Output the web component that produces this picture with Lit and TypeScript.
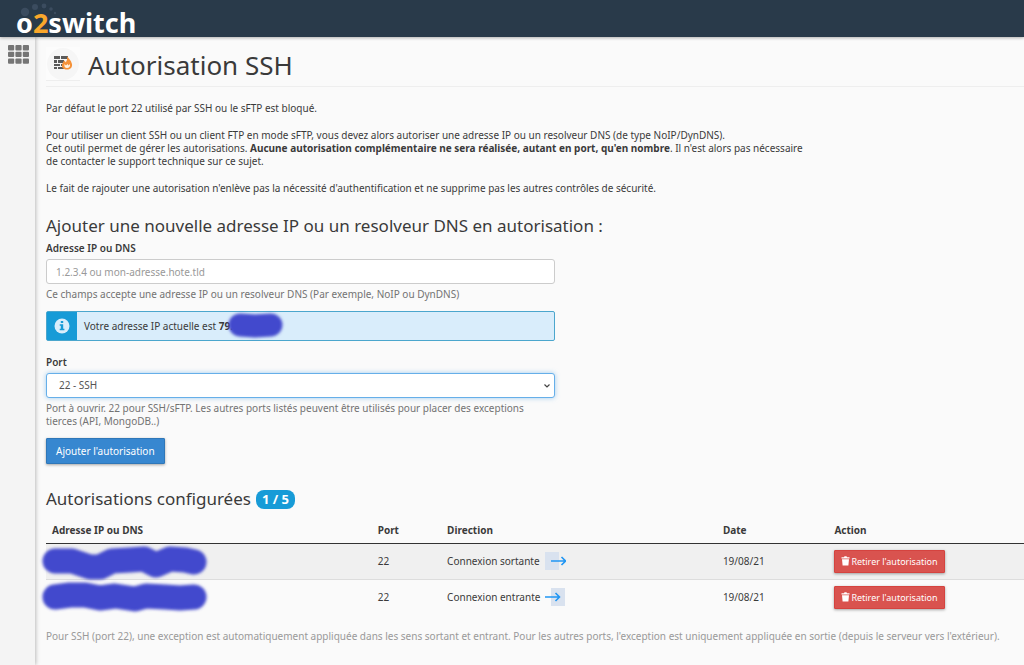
import { LitElement, html, svg, css } from "lit";
import { customElement, state } from "lit/decorators.js";

interface Rule {
  id: string;
  port: number;
  direction: "sortante" | "entrante";
  date: string;
  mask: string;
}

const RULES: Rule[] = [
  {
    id: "out",
    port: 22,
    direction: "sortante",
    date: "19/08/21",
    mask: "M15 18 L32 18 L50 24 L60 24 L72 18 L90 17 L104 16 L116 22 L130 16 L145 17 L154 19",
  },
  {
    id: "in",
    port: 22,
    direction: "entrante",
    date: "19/08/21",
    mask: "M15 18 L30 16 L45 16 L60 19 L75 17 L95 20 L106 17 L125 18 L140 19 L154 18",
  },
];

@customElement("app-root")
export class AppRoot extends LitElement {
  @state() private rules = RULES;

  static styles = css`
    :host {
      display: flex;
      flex-direction: column;
      min-height: 100vh;
      background: #fafafa;
      color: #3a3a3a;
      font: 10px/13px "Noto Sans", "Open Sans", sans-serif;
    }
    * {
      box-sizing: border-box;
    }
    .topbar {
      display: flex;
      align-items: center;
      height: 37px;
      padding: 0 16px;
      background: #293a4a;
      box-shadow: 0 1px 3px rgba(0, 0, 0, 0.3);
      z-index: 1;
    }
    .logo {
      position: relative;
      padding-top: 8px;
      font: 700 27px/30px "Noto Sans", "Open Sans", sans-serif;
      color: #fff;
      text-decoration: none;
    }
    .logo-two {
      color: #f9a72b;
    }
    .logo-dots {
      position: absolute;
      left: 3px;
      top: 2px;
    }
    .logo-text {
      position: relative;
    }
    .body {
      display: flex;
      flex: 1;
    }
    .rail {
      flex: none;
      width: 35px;
      padding: 8px 0 0 8px;
      background: #f4f4f4;
      box-shadow: 1px 0 4px rgba(0, 0, 0, 0.25);
    }
    .apps {
      display: block;
      padding: 0;
      border: 0;
      background: none;
    }
    .apps svg {
      display: block;
    }
    main {
      flex: 1;
      min-width: 0;
      padding: 9px 0 20px 11px;
    }
    .title {
      display: flex;
      align-items: center;
      gap: 8px;
      height: 41px;
      border-bottom: 1px solid #eee;
      padding-bottom: 4px;
    }
    .title svg {
      flex: none;
    }
    h1 {
      margin: 0;
      padding-top: 2px;
      font-size: 26px;
      line-height: 32px;
      font-weight: 400;
    }
    h2 {
      display: flex;
      align-items: center;
      gap: 5px;
      margin: 0;
      font-size: 17px;
      line-height: 22px;
      font-weight: 400;
    }
    .intro {
      display: flex;
      flex-direction: column;
      gap: 14px;
      max-width: 78%;
      padding: 15px 0 20px;
    }
    p {
      margin: 0;
    }
    .form {
      width: 52%;
      padding-bottom: 24px;
    }
    .label {
      display: block;
      padding: 5px 0 4px;
      font-weight: 600;
    }
    .field {
      display: block;
      width: 100%;
      height: 25px;
      padding: 0 9px;
      border: 1px solid #ccc;
      border-radius: 3px;
      background: #fff;
      color: #555;
      font: inherit;
    }
    .field::placeholder {
      color: #999;
      opacity: 1;
    }
    .select {
      position: relative;
    }
    .select .field {
      appearance: none;
      padding: 0 12px;
      border-color: #66afe9;
      box-shadow: 0 0 5px rgba(102, 175, 233, 0.6);
    }
    .chevron {
      position: absolute;
      right: 4px;
      top: 10px;
      pointer-events: none;
    }
    .help {
      padding-top: 4px;
      color: #737373;
    }
    .alert {
      display: flex;
      height: 30px;
      margin: 10px 0;
      border: 1px solid #4ba6cd;
      border-radius: 2px;
      background: #d9edfb;
    }
    .alert-icon {
      display: flex;
      align-items: center;
      justify-content: center;
      width: 30px;
      background: #179bd7;
    }
    .alert-text {
      display: flex;
      align-items: center;
      padding-left: 7px;
      white-space: pre;
    }
    .ip-mask {
      margin: -6px 0 -6px -8px;
    }
    button {
      font: inherit;
      cursor: pointer;
    }
    .btn {
      display: inline-flex;
      align-items: center;
      color: #fff;
      border: 1px solid;
      border-radius: 1px;
      box-shadow: 0 1px 3px rgba(0, 0, 0, 0.35);
    }
    .btn-primary {
      height: 26px;
      margin-top: 10px;
      padding: 0 9px;
      background: #3787d0;
      border-color: #2f77b8;
    }
    .btn-danger {
      gap: 1px;
      height: 23px;
      padding: 0 6px;
      background: #d9534f;
      border-color: #d5433f;
      font-size: 9px;
    }
    .badge {
      padding: 0 6px;
      border-radius: 8px;
      background: #179bd7;
      color: #fff;
      font-size: 13px;
      line-height: 19px;
      font-weight: 700;
    }
    table {
      width: 100%;
      margin-top: 9px;
      border-collapse: collapse;
      table-layout: fixed;
    }
    th,
    td {
      padding: 0 6px;
      text-align: left;
      white-space: nowrap;
    }
    th {
      height: 24px;
      border-bottom: 1px solid #333;
      font-weight: 700;
    }
    td {
      height: 36px;
      border-bottom: 1px solid #ddd;
    }
    tbody tr:nth-child(odd) {
      background: #f0f0f0;
    }
    tbody tr:last-child td {
      border-bottom: 0;
    }
    .c-host {
      width: 33.3%;
    }
    .c-port {
      width: 7.1%;
    }
    .c-dir {
      width: 28.2%;
    }
    .c-date {
      width: 11.4%;
    }
    .mask {
      display: block;
      margin: -2px 0 -2px -12px;
      overflow: visible;
    }
    .direction {
      display: flex;
      align-items: center;
      gap: 5px;
    }
    .note {
      padding-top: 15px;
      color: #999;
    }
  `;

  private arrow(direction: Rule["direction"]) {
    const out = direction === "sortante";
    return html`<svg width="21" height="18" viewBox="0 0 21 18" aria-hidden="true">
      <rect x=${out ? 0 : 6} y="0" width="14" height="18" fill="#d9e2ef" />
      <g transform=${out ? "translate(6 0)" : "translate(0 0)"} fill="none" stroke="#2196f3" stroke-width="1.600">
        <path d="M0 9H14M10.500 5L14.500 9L10.500 13" />
      </g>
    </svg>`;
  }

  private remove(id: string) {
    this.rules = this.rules.filter((rule) => rule.id !== id);
  }

  render() {
    return html`
      <header class="topbar">
        <a class="logo" href="#" aria-label="o2switch">
          <svg class="logo-dots" width="40" height="18" viewBox="0 0 40 18" fill="#3b4c5f">
            <circle cx="6" cy="10" r="4.200" />
            <circle cx="16" cy="5" r="3" />
            <circle cx="25" cy="4" r="2.400" />
            <circle cx="32" cy="7" r="1.800" />
            <circle cx="36" cy="11" r="1.200" />
          </svg>
          <span class="logo-text">o<span class="logo-two">2</span>switch</span>
        </a>
      </header>
      <div class="body">
        <nav class="rail">
          <button class="apps" aria-label="Menu">
            <svg width="21" height="19" viewBox="0 0 21 19" fill="#757575">
              ${[0, 1, 2].map((r) =>
                [0, 1, 2].map(
                  (c) => svg`<rect x=${c * 7.4} y=${r * 6.7} width="6.200" height="5.400" rx="1" />`
                )
              )}
            </svg>
          </button>
        </nav>
        <main>
          <div class="title">
            <svg width="34" height="34" viewBox="0 0 34 34" aria-hidden="true">
              <rect width="34" height="34" fill="#fcfcfc" />
              <path d="M0 33.500H34" stroke="#eee" />
              <circle cx="17" cy="17" r="16" fill="#f6f6f6" />
              <path
                fill="#5a5a5a"
                d="M8 9h6v3H8zM15 9h7v3h-7zM8 13h3v3H8zM12 13h6v3h-6zM8 17h6v2H8zM15 17h3v2h-3zM8 20h3v2H8zM12 20h6v2h-6z"
              />
              <path
                fill="#f5923a"
                d="M21 9C22 11 25 13 26 17C26.500 21 24 22.500 21 22.500C18 22.500 15.500 21 16 18C16.300 16 17.500 15 18 13.500C19 14 19.500 15 19.500 15.500C21 14 21.500 11.500 21 9Z"
              />
              <path fill="#fff3e4" d="M18.500 17L20 18.500L21.500 17L22.500 18.500L24 17C24.500 19.500 23 21 21 21S18 19.500 18.500 17Z" />
            </svg>
            <h1>Autorisation SSH</h1>
          </div>

          <section class="intro">
            <p>Par défaut le port 22 utilisé par SSH ou le sFTP est bloqué.</p>
            <p>
              Pour utiliser un client SSH ou un client FTP en mode sFTP, vous devez alors autoriser une adresse IP ou un
              resolveur DNS (de type NoIP/DynDNS).<br />
              Cet outil permet de gérer les autorisations.
              <b>Aucune autorisation complémentaire ne sera réalisée, autant en port, qu'en nombre</b>. Il n'est alors
              pas nécessaire de contacter le support technique sur ce sujet.
            </p>
            <p>
              Le fait de rajouter une autorisation n'enlève pas la nécessité d'authentification et ne supprime pas les
              autres contrôles de sécurité.
            </p>
          </section>

          <h2>Ajouter une nouvelle adresse IP ou un resolveur DNS en autorisation :</h2>
          <form class="form" @submit=${(e: Event) => e.preventDefault()}>
            <label class="label" for="host">Adresse IP ou DNS</label>
            <input class="field" id="host" type="text" placeholder="1.2.3.4 ou mon-adresse.hote.tld" />
            <p class="help">Ce champs accepte une adresse IP ou un resolveur DNS (Par exemple, NoIP ou DynDNS)</p>
            <div class="alert">
              <span class="alert-icon">
                <svg width="16" height="16" viewBox="0 0 16 16" aria-hidden="true">
                  <circle cx="8" cy="8" r="7.500" fill="#d9edfb" />
                  <path fill="#179bd7" d="M6.800 3h2.400v2H6.800zM5.700 6.300h3.500v4.500h1.200v1.500H5.700v-1.500h1.100V7.800H5.700z" />
                </svg>
              </span>
              <span class="alert-text">Votre adresse IP actuelle est <b>79.</b><svg
                  class="ip-mask"
                  width="62"
                  height="32"
                  viewBox="0 0 62 32"
                  aria-hidden="true"
                >
                  <defs>
                    <filter id="soft-ip" filterUnits="userSpaceOnUse" x="-10" y="-10" width="82" height="52">
                      <feGaussianBlur stdDeviation="1.800" />
                    </filter>
                  </defs>
                  <path
                    d="M15 15L30 16L46 15"
                    fill="none"
                    stroke="#4348cd"
                    stroke-width="23"
                    stroke-linecap="round"
                    stroke-linejoin="round"
                    filter="url(#soft-ip)"
                  /></svg
              ></span>
            </div>
            <label class="label" for="port">Port</label>
            <div class="select">
              <select class="field" id="port">
                <option>22 - SSH</option>
              </select>
              <svg class="chevron" width="8" height="6" viewBox="0 0 8 6" fill="none" stroke="#444" stroke-width="1.200">
                <path d="M1.500 1.500L4 4L6.500 1.500" />
              </svg>
            </div>
            <p class="help">
              Port à ouvrir. 22 pour SSH/sFTP. Les autres ports listés peuvent être utilisés pour placer des exceptions
              tierces (API, MongoDB..)
            </p>
            <button class="btn btn-primary" type="submit">Ajouter l'autorisation</button>
          </form>

          <h2>Autorisations configurées <span class="badge">1 / 5</span></h2>
          <table>
            <thead>
              <tr>
                <th class="c-host">Adresse IP ou DNS</th>
                <th class="c-port">Port</th>
                <th class="c-dir">Direction</th>
                <th class="c-date">Date</th>
                <th>Action</th>
              </tr>
            </thead>
            <tbody>
              ${this.rules.map(
                (rule) => html`<tr>
                  <td>
                    <svg class="mask" width="170" height="36" viewBox="0 0 170 36" aria-hidden="true">
                      <defs>
                        <filter id="soft" filterUnits="userSpaceOnUse" x="-10" y="-10" width="190" height="60">
                          <feGaussianBlur stdDeviation="1.800" />
                        </filter>
                      </defs>
                      <path
                        d=${rule.mask}
                        fill="none"
                        stroke="#4348cd"
                        stroke-width="25"
                        stroke-linecap="round"
                        stroke-linejoin="round"
                        filter="url(#soft)"
                      />
                    </svg>
                  </td>
                  <td>${rule.port}</td>
                  <td>
                    <span class="direction">Connexion ${rule.direction} ${this.arrow(rule.direction)}</span>
                  </td>
                  <td>${rule.date}</td>
                  <td>
                    <button class="btn btn-danger" @click=${() => this.remove(rule.id)}>
                      <svg width="9" height="10" viewBox="0 0 9 10" fill="#fff" aria-hidden="true">
                        <path d="M0.500 1.200h2.500l0.500-0.900h2l0.500 0.900h2.500v1.300h-8zM1 3.200h7l-0.600 6.300h-5.800z" />
                      </svg>
                      Retirer l'autorisation
                    </button>
                  </td>
                </tr>`
              )}
            </tbody>
          </table>
          <p class="note">
            Pour SSH (port 22), une exception est automatiquement appliquée dans les sens sortant et entrant. Pour les
            autres ports, l'exception est uniquement appliquée en sortie (depuis le serveur vers l'extérieur).
          </p>
        </main>
      </div>
    `;
  }
}
